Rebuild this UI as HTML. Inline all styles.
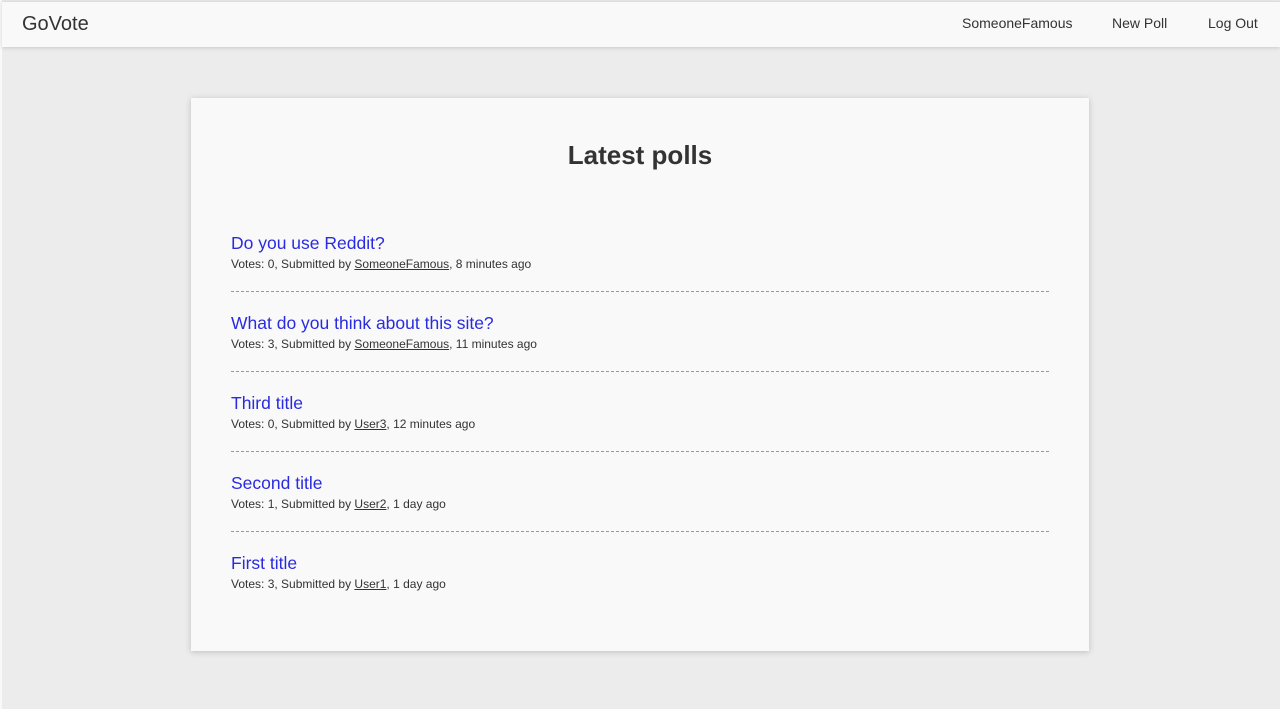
<!DOCTYPE html>
<html><head><style>
html,body{margin:0;padding:0}
body{width:1280px;height:709px;background:#ececec;font-family:"Liberation Sans",sans-serif;color:#333;position:relative;overflow:hidden}
.strip{position:absolute;left:0;top:0;width:2px;height:709px;background:#f9f9f9}
.nav{position:absolute;left:2px;top:1px;width:1278px;height:45px;background:#f9f9f9;box-shadow:0 1px 4px rgba(0,0,0,.15);border-top:1px solid #ddd}
.brand{position:absolute;left:20px;top:11px;font-size:20px;color:#333}
.nl{position:absolute;top:13px;font-size:14px;color:#333}
.card{position:absolute;left:191px;top:98px;width:898px;height:553px;background:#f9f9f9;box-shadow:0 1px 6px rgba(0,0,0,.2)}
h1{position:absolute;left:0;right:0;top:140px;margin:0;text-align:center;font-size:26px;font-weight:bold;color:#333}
.item{position:absolute;left:231px;width:818px;height:80px}
.t{position:absolute;top:1px;font-size:17.5px;color:#2a2ae0}
.m{position:absolute;top:25px;font-size:12px;color:#333;white-space:nowrap}
.m u{color:#333}
.d{position:absolute;left:0;width:818px;border-top:1px dashed #999}
</style></head><body>
<div class="strip"></div>
<div class="nav"><div class="brand">GoVote</div>
<div class="nl" style="left:960px">SomeoneFamous</div>
<div class="nl" style="left:1110px">New Poll</div>
<div class="nl" style="left:1206px">Log Out</div></div>
<div class="card"></div>
<h1>Latest polls</h1>
<div class="item" style="top:232px"><div class="t">Do you use Reddit?</div><div class="m">Votes: 0, Submitted by <u>SomeoneFamous</u>, 8 minutes ago</div><div class="d" style="top:59px"></div></div>
<div class="item" style="top:312px"><div class="t">What do you think about this site?</div><div class="m">Votes: 3, Submitted by <u>SomeoneFamous</u>, 11 minutes ago</div><div class="d" style="top:59px"></div></div>
<div class="item" style="top:392px"><div class="t">Third title</div><div class="m">Votes: 0, Submitted by <u>User3</u>, 12 minutes ago</div><div class="d" style="top:59px"></div></div>
<div class="item" style="top:472px"><div class="t">Second title</div><div class="m">Votes: 1, Submitted by <u>User2</u>, 1 day ago</div><div class="d" style="top:59px"></div></div>
<div class="item" style="top:552px"><div class="t">First title</div><div class="m">Votes: 3, Submitted by <u>User1</u>, 1 day ago</div></div>
</body></html>
